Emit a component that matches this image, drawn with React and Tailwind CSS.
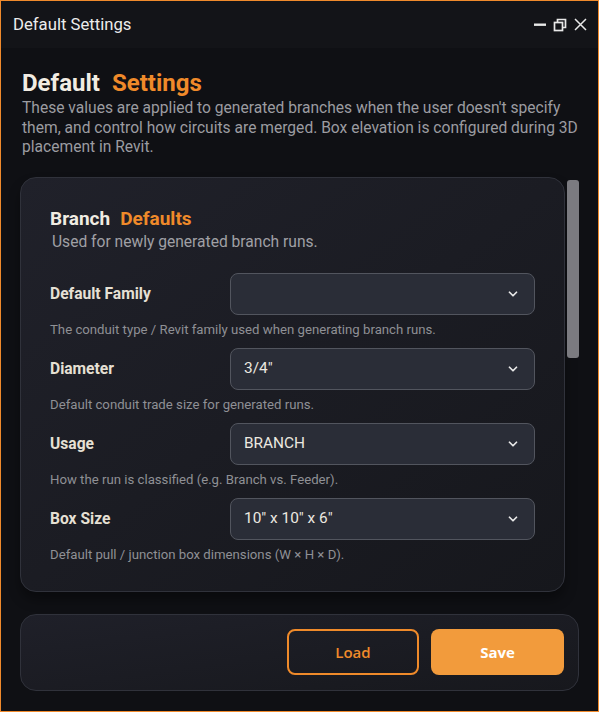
import React from 'react';
import { ChevronDown } from 'lucide-react';

const fields = [
  { label: 'Default Family', value: '', help: 'The conduit type / Revit family used when generating branch runs.' },
  { label: 'Diameter', value: '3/4"', help: 'Default conduit trade size for generated runs.' },
  { label: 'Usage', value: 'BRANCH', help: 'How the run is classified (e.g. Branch vs. Feeder).' },
  { label: 'Box Size', value: '10" x 10" x 6"', help: 'Default pull / junction box dimensions (W × H × D).' },
];

const WindowButtons = () => (
  <div className="flex items-center gap-[5px] text-[#e8e8e8]">
    <svg width="15" height="15" viewBox="0 0 15 15">
      <rect x="1" y="6.5" width="12" height="2.4" fill="currentColor" />
    </svg>
    <svg width="15" height="15" viewBox="0 0 15 15" fill="none" stroke="currentColor" strokeWidth="1.7">
      <rect x="1.5" y="5.5" width="8" height="8" />
      <path d="M4.5 5.5V2.5h8v8H9.5" />
    </svg>
    <svg width="15" height="15" viewBox="0 0 15 15" fill="none" stroke="currentColor" strokeWidth="1.5">
      <path d="M2 2l11 11M13 2L2 13" />
    </svg>
  </div>
);

const App = () => {
  return (
    <div className="w-[599px] h-[712px] border border-[#f08a2c] bg-[#0f1014] flex flex-col overflow-hidden font-['Roboto',sans-serif]">
      {/* Title bar */}
      <div className="h-[47px] shrink-0 bg-[#131418] flex items-center justify-between pl-[12px] pr-[10px]">
        <span className="text-[16.7px] text-[#ececec]">Default Settings</span>
        <WindowButtons />
      </div>

      <main className="flex-1 flex flex-col px-[19px] pt-[20px]">
        {/* Header */}
        <h1 className="text-[24px] font-bold leading-[30px] pl-[2px]">
          <span className="text-[#f1ece2]">Default</span>
          <span className="text-[#ef8a2a] ml-[12px]">Settings</span>
        </h1>
        <p className="text-[15.6px] leading-[19.5px] text-[#9c9ca1] pl-[2px] mt-[1px]">
          These values are applied to generated branches when the user doesn't specify them, and control how circuits are merged. Box elevation is configured during 3D placement in Revit.
        </p>

        {/* Scroll area */}
        <div className="flex gap-[2px] mt-[19px]">
          <section className="flex-1 rounded-[16px] border border-[#30323b] bg-gradient-to-br from-[#20212a] to-[#16171c] pl-[29px] pr-[29px] pt-[29px] pb-[27px] shadow-[0_8px_12px_rgba(0,0,0,0.35)]">
            <h2 className="text-[19px] font-bold leading-[24px]">
              <span className="text-[#f1ece2]">Branch</span>
              <span className="text-[#ef8a2a] ml-[10px]">Defaults</span>
            </h2>
            <p className="text-[15.6px] leading-[20px] text-[#a0a0a5] pl-[2px] mt-[1px]">Used for newly generated branch runs.</p>

            <div className="flex flex-col gap-[9px] mt-[21px]">
              {fields.map((f) => (
                <div key={f.label}>
                  <div className="flex items-center">
                    <label className="w-[180px] shrink-0 text-[15.6px] font-bold text-[#e6e0d4] pt-[2px]">{f.label}</label>
                    <div className="flex-1 h-[42px] rounded-[8px] border border-[#52555e] bg-[#2a2d37] flex items-center justify-between pl-[13px] pr-[14px]">
                      <span className="text-[15.4px] text-[#ece8e0]">{f.value}</span>
                      <ChevronDown size={14} strokeWidth={3} className="text-[#e8e8e8]" />
                    </div>
                  </div>
                  <p className="text-[13.2px] leading-[18px] text-[#8f9095] mt-[6px]">{f.help}</p>
                </div>
              ))}
            </div>
          </section>

          {/* Scrollbar */}
          <div className="w-[12px] shrink-0 pt-[3px]">
            <div className="h-[178px] rounded-[3px] bg-[#7b7b80]" />
          </div>
        </div>

        {/* Footer */}
        <footer className="mt-[22px] rounded-[16px] border border-[#30323b] bg-gradient-to-br from-[#1f2029] to-[#17181d] h-[77px] flex items-center justify-end gap-[12px] pr-[14px] font-['Open_Sans',sans-serif]">
          <button className="w-[132px] h-[46px] rounded-[8px] border-2 border-[#ef8a2a] text-[#ef8a2a] text-[15px] font-semibold">
            Load
          </button>
          <button className="w-[133px] h-[46px] rounded-[8px] bg-[#f29b3c] text-white text-[15px] font-bold">
            Save
          </button>
        </footer>
      </main>
    </div>
  );
};

export default App;
